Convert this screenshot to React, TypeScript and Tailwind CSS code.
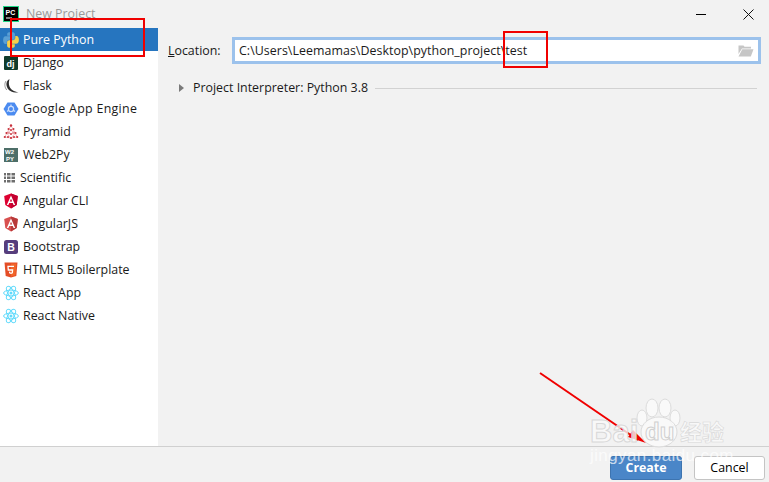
const font = "font-['Open_Sans','Noto_Sans',sans-serif]";

function PycharmLogo() {
  return (
    <svg width="16" height="16" viewBox="0 0 16 16" className="shrink-0">
      <rect x="0" y="0" width="16" height="16" fill="#21d789" />
      <rect x="1" y="1" width="14" height="14" fill="#000" />
      <text x="2.5" y="8.5" fontSize="7" fontWeight="700" fill="#fff" fontFamily="Liberation Sans">PC</text>
      <rect x="3" y="11.5" width="6" height="1" fill="#fff" />
    </svg>
  );
}

const snake =
  "M54.9 0.9C50.3 0.9 46 1.3 42.2 2 31 4 29 8.1 29 15.7V25.8H55.4V29.1H19.1C11.4 29.1 4.7 33.7 2.6 42.5 .2 52.5 .1 58.8 2.6 69.2 4.5 76.9 8.9 82.4 16.6 82.4H25.6V70.4C25.6 61.7 33.1 54 42.2 54H68.6C76 54 81.9 47.9 81.9 40.5V15.7C81.9 8.6 75.9 3.2 68.6 2 64.1 1.3 59.4.9 54.9 .9Z";

function PythonIcon() {
  return (
    <svg width="16" height="16" viewBox="0 0 110 110">
      <path d={snake} fill="#5a9fd4" />
      <path d={snake} fill="#f5cf4a" transform="rotate(180 55 55)" />
    </svg>
  );
}

function DjangoIcon() {
  return (
    <svg width="16" height="16" viewBox="0 0 16 16">
      <rect x="1" y="1" width="14" height="14" rx="1" fill="#103c2c" />
      <text x="3.5" y="11.5" fontSize="9" fontWeight="700" fill="#fff" fontFamily="Liberation Sans">dj</text>
    </svg>
  );
}

function FlaskIcon() {
  return (
    <svg width="16" height="16" viewBox="0 0 16 16">
      <path d="M6.5 1C3.5 2.5 2.8 6 4 9C5.2 12.5 9.5 15 15.5 14.5C11 13.5 7.5 11.5 6.5 8.5C5.6 6 5.8 3.5 6.5 1Z" fill="#2f2f2f" />
      <path d="M3 3C1.2 5.5 1.6 9.5 3.8 12" fill="none" stroke="#9a9a9a" strokeWidth="1" />
    </svg>
  );
}

function GaeIcon() {
  return (
    <svg width="16" height="16" viewBox="0 0 16 16" fill="none">
      <path d="M4.5 1.5H11.5L15.5 8L11.5 14.5H4.5L0.5 8Z" fill="#4b8bf0" />
      <circle cx="8" cy="8" r="2.6" stroke="#cfe0fb" strokeWidth="1.2" />
      <path d="M8 3.5V5M4 10.5L5.6 9.3M12 10.5L10.4 9.3" stroke="#cfe0fb" strokeWidth="1.2" />
    </svg>
  );
}

function PyramidIcon() {
  const dots = [
    [8, 1.5, 1.2], [5.5, 5, 1], [10.5, 5, 1], [8, 6, 0.9], [3.5, 9, 1.1], [12.5, 9, 1.1],
    [6, 9, 0.8], [10, 9, 0.8], [8, 10, 1], [1.8, 13, 1.1], [14.2, 13, 1.1], [5, 13, 1], [8, 14, 1.1], [11, 13, 1],
  ];
  return (
    <svg width="16" height="16" viewBox="0 0 16 16">
      <path d="M8 1.5L1.8 13L8 14L14.2 13ZM5.5 5L12.5 9L8 14L3.5 9L10.5 5" fill="none" stroke="#e58a90" strokeWidth="0.6" />
      {dots.map(([x, y, r], i) => (
        <circle key={i} cx={x} cy={y} r={r} fill="#c8313b" />
      ))}
    </svg>
  );
}

function Web2pyIcon() {
  return (
    <svg width="16" height="16" viewBox="0 0 16 16">
      <rect x="1" y="1" width="14" height="14" fill="#4d6e68" />
      <text x="2" y="7" fontSize="6" fontWeight="700" fill="#fff" fontFamily="Liberation Sans">W2</text>
      <text x="3" y="13.5" fontSize="6" fontWeight="700" fill="#fff" fontFamily="Liberation Sans">PY</text>
    </svg>
  );
}

function ScientificIcon() {
  return (
    <svg width="11" height="10" viewBox="0 0 11 10" fill="#6e6e6e">
      {[0, 3.5, 7].map((y) => (
        <g key={y}>
          <rect x="0" y={y} width="2" height="2.5" />
          <rect x="3" y={y} width="3.5" height="2.5" />
          <rect x="7.5" y={y} width="3.5" height="2.5" />
        </g>
      ))}
    </svg>
  );
}

function AngularIcon({ dim }: { dim?: boolean }) {
  return (
    <svg width="16" height="16" viewBox="0 0 16 16">
      <path d="M8 0.5L1.2 3L2.3 12L8 15.5L13.7 12L14.8 3Z" fill={dim ? "#d8504f" : "#dd0031"} />
      <path d="M8 0.5L14.8 3L13.7 12L8 15.5Z" fill={dim ? "#b83a3a" : "#c3002f"} />
      <path d="M8 2.5L3.8 12H5.4L6.2 10H9.8L10.6 12H12.2ZM6.8 8.6L8 5.7L9.2 8.6Z" fill="#fff" />
    </svg>
  );
}

function BootstrapIcon() {
  return (
    <svg width="16" height="16" viewBox="0 0 16 16">
      <rect x="1" y="1" width="14" height="14" rx="2.5" fill="#563d7c" />
      <text x="4.3" y="12" fontSize="10.5" fontWeight="700" fill="#fff" fontFamily="Liberation Sans">B</text>
    </svg>
  );
}

function HtmlIcon() {
  return (
    <svg width="16" height="16" viewBox="0 0 16 16">
      <path d="M1.5 0.5H14.5L13.3 14L8 15.5L2.7 14Z" fill="#e44d26" />
      <path d="M8 1.5V14.5L12.4 13.3L13.4 1.5Z" fill="#f16529" />
      <path d="M11 4.3H5L5.3 8H9.6L9.3 10.8L8 11.3L6.7 10.8L6.6 9.6" fill="none" stroke="#fff" strokeWidth="1.3" />
    </svg>
  );
}

function ReactIcon() {
  return (
    <svg width="16" height="16" viewBox="0 0 16 16" fill="none" stroke="#61dafb" strokeWidth="1">
      <ellipse cx="8" cy="8" rx="7.4" ry="2.9" />
      <ellipse cx="8" cy="8" rx="7.4" ry="2.9" transform="rotate(60 8 8)" />
      <ellipse cx="8" cy="8" rx="7.4" ry="2.9" transform="rotate(120 8 8)" />
      <circle cx="8" cy="8" r="1.5" fill="#61dafb" stroke="none" />
    </svg>
  );
}

const items = [
  { name: "Pure Python", icon: <PythonIcon />, selected: true },
  { name: "Django", icon: <DjangoIcon /> },
  { name: "Flask", icon: <FlaskIcon /> },
  { name: "Google App Engine", icon: <GaeIcon />, wide: true },
  { name: "Pyramid", icon: <PyramidIcon /> },
  { name: "Web2Py", icon: <Web2pyIcon /> },
  { name: "Scientific", icon: <ScientificIcon />, small: true },
  { name: "Angular CLI", icon: <AngularIcon /> },
  { name: "AngularJS", icon: <AngularIcon dim /> },
  { name: "Bootstrap", icon: <BootstrapIcon /> },
  { name: "HTML5 Boilerplate", icon: <HtmlIcon /> },
  { name: "React App", icon: <ReactIcon /> },
  { name: "React Native", icon: <ReactIcon /> },
];

export default function App() {
  return (
    <div className={`relative flex h-[482px] w-[769px] flex-col overflow-hidden bg-[#f2f2f2] text-[12.4px] text-[#1a1a1a] ${font}`}>
      {/* title bar */}
      <div className="flex h-[28px] shrink-0 items-center pl-[3px]">
        <PycharmLogo />
        <span className="ml-[7px] pt-px text-[#9a9a9a]">New Project</span>
        <div className="ml-auto mr-[15px] flex items-center gap-[37px]">
          <div className="h-px w-[10px] bg-black" />
          <svg width="11" height="11" viewBox="0 0 11 11" stroke="#111" strokeWidth="1">
            <path d="M0.5 0.5L10.5 10.5M10.5 0.5L0.5 10.5" />
          </svg>
        </div>
      </div>

      <div className="flex min-h-0 flex-1">
        {/* project types */}
        <div className="w-[158px] shrink-0 bg-white">
          {items.map((item) => (
            <div
              key={item.name}
              className={`flex h-[23px] items-center ${item.small ? "gap-[5px] pl-[4px]" : "gap-[4px] pl-[3px]"} ${item.selected ? "bg-[#2675bf] text-white" : ""}`}
            >
              {item.icon}
              <span className={`pt-[2px] ${item.wide ? "tracking-[0.3px]" : ""}`}>{item.name}</span>
            </div>
          ))}
        </div>

        {/* settings */}
        <div className="min-w-0 flex-1 pl-[10px] pr-[8px] pt-[9px]">
          <div className="flex items-center">
            <span className="w-[64px] shrink-0 pt-[2px]">
              <span className="underline">L</span>ocation:
            </span>
            <div className="flex h-[27px] flex-1 items-center border-[3px] border-[#9cc2ec] bg-white pl-[4px] pr-[4px]">
              <span className="flex-1 pt-[2px] tracking-[0.05px]">C:\Users\Leemamas\Desktop\python_project\test</span>
              <svg width="16" height="12" viewBox="0 0 16 12" fill="#c6c6c6">
                <path d="M0.5 0.5H5.5L6.5 1.8H13V3.5H4L0.5 9Z" />
                <path d="M4.3 4.3H15.5L12.8 11.5H0.5Z" />
              </svg>
            </div>
          </div>
          <div className="mt-[15px] flex items-center pl-[11px] pr-[4px]">
            <div className="h-0 w-0 border-y-[4px] border-l-[5px] border-y-transparent border-l-[#7a7a7a]" />
            <span className="ml-[9px]">Project Interpreter: Python 3.8</span>
            <div className="ml-[7px] h-px flex-1 bg-[#d2d2d2]" />
          </div>
        </div>
      </div>

      {/* footer */}
      <div className="flex h-[36px] shrink-0 items-start justify-end gap-[12px] border-t border-[#d0d0d0] pr-[4px] pt-[9px]">
        <button className="flex h-[24px] w-[72px] items-center justify-center rounded-[3px] border border-[#3d74b0] bg-[#4a86c8] font-bold text-white">
          Create
        </button>
        <button className="flex h-[24px] w-[71px] items-center justify-center rounded-[3px] border border-[#c4c4c4] bg-white text-black">
          Cancel
        </button>
      </div>

      {/* screenshot annotations */}
      <div className="absolute left-[10px] top-[18px] h-[39px] w-[135px] border-2 border-[#f00000]" />
      <div className="absolute left-[503px] top-[31px] h-[37px] w-[45px] border-2 border-[#f00000]" />
      <svg className="absolute left-[530px] top-[365px]" width="120" height="85" viewBox="0 0 120 85" fill="none">
        <path d="M10 8L108 75" stroke="#f00000" strokeWidth="2" />
        <path d="M116 78L98 72L103 65Z" fill="#f00000" />
      </svg>

      {/* watermark */}
      <svg className="absolute left-[636px] top-[396px]" width="50" height="54" viewBox="0 0 50 54" fill="#fafafa" fillOpacity="0.8" stroke="#dcdcdc">
        <ellipse cx="16" cy="12" rx="6" ry="9" />
        <ellipse cx="29" cy="12" rx="6" ry="9" />
        <ellipse cx="6" cy="22" rx="5" ry="8" />
        <ellipse cx="39" cy="22" rx="5" ry="8" />
        <ellipse cx="23" cy="36" rx="18" ry="15" />
      </svg>
      <div className="absolute left-[590px] top-[416px] font-['Liberation_Sans',sans-serif] text-[31px] font-bold leading-[31px] text-[#fafafa]/80 [-webkit-text-stroke:1px_#d8d8d8]">
        Bai
      </div>
      <div className="absolute left-[645px] top-[420px] font-['Liberation_Sans',sans-serif] text-[24px] font-bold leading-[24px] text-[#fafafa] [-webkit-text-stroke:1px_#d0d0d0]">
        du
      </div>
      <div className="absolute left-[680px] top-[418px] font-['Noto_Sans_CJK_SC',sans-serif] text-[22px] font-bold leading-[24px] text-[#fafafa]/80 [-webkit-text-stroke:0.6px_#d8d8d8]">
        经验
      </div>
      <div className="absolute left-[590px] top-[446px] font-['Liberation_Sans',sans-serif] text-[17px] leading-[20px] tracking-[0.4px] text-white/70">
        jingyan.baidu.com
      </div>
    </div>
  );
}
